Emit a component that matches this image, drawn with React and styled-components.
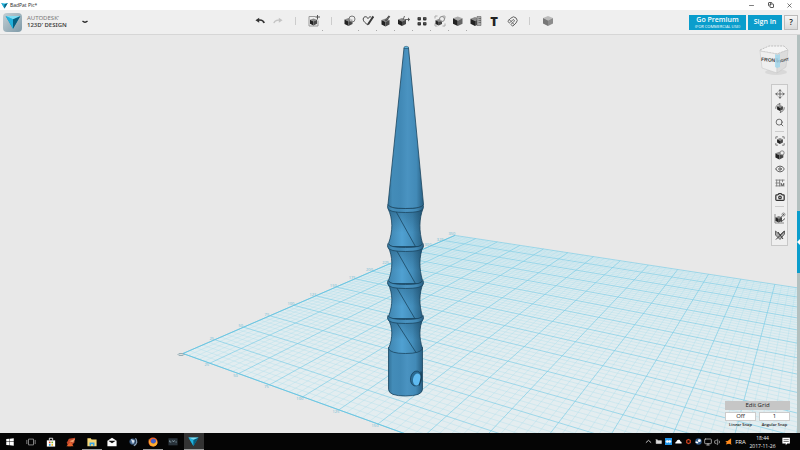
import React, { useState } from 'react';
import styled, { createGlobalStyle } from 'styled-components';
import { Eye, Magnet, Minus, Monitor, Move, Volume1, X, Copy, Search, Camera } from 'lucide-react';

const GlobalStyle = createGlobalStyle`
  * {
    box-sizing: border-box;
  }
  body {
    margin: 0;
    background: #e8e8e8;
    font-family: "Open Sans", "Noto Sans", sans-serif;
  }
  button, select {
    font-family: inherit;
    margin: 0;
    padding: 0;
    border: 0;
    background: none;
    color: inherit;
  }
  svg {
    display: block;
  }
`

/* ---------- icons ---------- */

const Icon = ({ size = 12, children }) => (
  <svg width={size} height={size} viewBox="0 0 24 24" fill="none" stroke="#3a3a3a" strokeWidth="2" aria-hidden="true">
    {children}
  </svg>
)

const Cube = ({ x = 2, y = 6, s = 16, top = '#8a8a8a', left = '#222', right = '#484848' }) => (
  <g transform={`translate(${x} ${y}) scale(${s / 16})`} stroke="none">
    <path d="M8 0 16 3 8 7 0 3Z" fill={top} />
    <path d="M0 3 8 7V16L0 12Z" fill={left} />
    <path d="M16 3 8 7V16L16 12Z" fill={right} />
  </g>
)

const Corners = ({ color = '#666' }) => (
  <path d="M2 7V2H7M17 2H22V7M22 17V22H17M7 22H2V17" stroke={color} />
)

const Gem = ({ size }) => (
  <svg width={size} height={size} viewBox="0 0 24 24" aria-hidden="true">
    <path d="M1 3H23L12 22Z" fill="#0d86ab" />
    <path d="M1 3 12 8 12 22Z" fill="#22b1dc" />
    <path d="M23 3 12 8 12 22Z" fill="#075f80" />
    <path d="M1 3H23L12 8Z" fill="#7fdcf2" />
  </svg>
)

const UndoIcon = () => (
  <Icon size={10}>
    <path d="M1 10 10 4V16Z" fill="#333" stroke="none" />
    <path d="M8 10Q19 8 22 17" stroke="#333" strokeWidth="4" />
  </Icon>
)
const RedoIcon = () => (
  <Icon size={10}>
    <path d="M23 10 14 4V16Z" fill="#c4c4c4" stroke="none" />
    <path d="M16 10Q5 8 2 17" stroke="#c4c4c4" strokeWidth="3" />
  </Icon>
)
const InsertIcon = () => (
  <Icon>
    <path d="M15 3H2V22H20V11" stroke="#999" />
    <Cube x={4} y={7} s={14} />
    <path d="M19 0V9M15 4H24" stroke="#555" />
  </Icon>
)
const PrimitivesIcon = () => (
  <Icon>
    <Cube x={1} y={6} />
    <circle cx="16" cy="8" r="6" fill="#efefef" fillOpacity="0.6" stroke="#777" />
  </Icon>
)
const SketchIcon = () => (
  <Icon>
    <path d="M12 20C5 15 1 11 3 6C5 2 10 3 12 7C14 4 16 3 18 4" />
    <path d="M12 19 22 4M20 3 23 6" strokeWidth="4" />
  </Icon>
)
const ConstructIcon = () => (
  <Icon>
    <Cube x={3} y={7} />
    <path d="M11 12 19 2" strokeWidth="4" />
    <path d="M11 12 19 2" stroke="#999" strokeWidth="1" />
  </Icon>
)
const ModifyIcon = () => (
  <Icon>
    <Cube x={0} y={6} />
    <path d="M10 10 13 2M14 9H23" stroke="#666" />
    <path d="M20 5 24 9 20 13Z" fill="#555" stroke="none" />
  </Icon>
)
const PatternIcon = () => (
  <Icon>
    {[[3, 4], [14, 4], [3, 14], [14, 14]].map(([x, y]) => (
      <g key={`${x}-${y}`}>
        <rect x={x} y={y} width="7" height="7" rx="2" fill="#333" stroke="none" />
        <path d={`M${x + 2} ${y + 2}H${x + 6}`} stroke="#aaa" strokeWidth="1" />
      </g>
    ))}
  </Icon>
)
const GroupIcon = () => (
  <Icon>
    <Corners color="#aaa" />
    <Cube x={3} y={8} s={13} />
    <circle cx="16" cy="8" r="5" stroke="#888" fill="#efefef" fillOpacity="0.6" />
  </Icon>
)
const CombineIcon = () => (
  <Icon>
    <Cube x={2} y={3} s={19} top="#aaa" left="#222" right="#666" />
  </Icon>
)
const MeasureIcon = () => (
  <Icon>
    <Cube x={1} y={4} s={18} />
    <path d="M14 3H22V21H14Z" fill="#aaa" stroke="#555" strokeWidth="1" />
    <path d="M17 7H22M17 11H22M17 15H22" strokeWidth="1" />
  </Icon>
)
const MaterialIcon = () => (
  <Icon>
    <Cube x={2} y={2} s={20} top="#bbb" left="#777" right="#8c8c8c" />
  </Icon>
)

const OrbitIcon = () => (
  <Icon size={10}>
    <Cube x={5} y={5} s={14} />
    <path d="M2 14C1 8 5 3 12 2M22 10C23 17 18 21 12 22M9 0 13 2 10 5M15 19 12 22 15 24" stroke="#666" />
  </Icon>
)
const FitIcon = () => (
  <Icon size={10}>
    <Corners />
    <Cube x={5} y={5} s={14} />
  </Icon>
)
const ShadeIcon = () => (
  <Icon size={10}>
    <Cube x={1} y={4} s={19} />
    <circle cx="17" cy="7" r="5" fill="#efefef" stroke="#777" />
  </Icon>
)
const GridSnapIcon = () => (
  <Icon size={10}>
    <path d="M1 5H23M1 12H13M1 19H23M4 4V20M11 4V20M18 4V10" stroke="#777" />
    <path d="M15 12V17H21V12" stroke="#333" />
  </Icon>
)
const SnapGroupIcon = () => (
  <Icon size={12}>
    <path d="M2 4V22H20" stroke="#888" />
    <Cube x={3} y={8} s={13} />
    <path d="M12 13 20 4M14 20 22 13" stroke="#555" />
    <circle cx="19" cy="5" r="3" stroke="#888" />
  </Icon>
)
const HideIcon = () => (
  <Icon size={12}>
    <path d="M3 4 12 12 21 4V10L12 21 3 12Z" fill="#aaa" stroke="#666" />
    <path d="M4 21 21 4M8 6 18 20" />
  </Icon>
)

/* ---------- scene ---------- */

// perspective of the work plane, t runs along the left edge and s along the front edge
const project = (t, s) => {
  const w = 1 + 0.0516 * t - 0.0338 * s;
  const x = (183 + 42.9 * t + 19.72 * s) / w;
  const y = (353 + 3.69 * t - 2.57 * s) / w;
  return [x.toFixed(1), y.toFixed(1)];
}

const T_MAX = 14;
const S_MAX = 20;

const gridPath = (major) => {
  let d = '';
  for (let i = 0; i <= S_MAX * 5; i++) {
    if ((i % 5 === 0) === major) d += `M${project(0, i / 5)}L${project(T_MAX, i / 5)}`;
  }
  for (let i = 0; i <= T_MAX * 5; i++) {
    if ((i % 5 === 0) === major) d += `M${project(i / 5, 0)}L${project(i / 5, S_MAX)}`;
  }
  return d;
}

const leftLabels = Array.from({ length: 14 }, (_, i) => i + 1);
const frontLabels = [1, 2, 3, 4, 5, 6];

const Grid = () => (
  <g>
    <path d={`M${project(0, 0)}L${project(T_MAX, 0)}L${project(T_MAX, S_MAX)}L${project(0, S_MAX)}Z`} fill="url(#plane)" />
    <path d={gridPath(false)} stroke="#a9dcec" strokeOpacity="0.6" strokeWidth="0.6" fill="none" />
    <path d={gridPath(true)} stroke="#7accE6" strokeOpacity="0.75" strokeWidth="0.9" fill="none" />
    <path d={`M${project(0, S_MAX)}L${project(0, 0)}L${project(T_MAX, 0)}`} stroke="#6cc6e2" strokeWidth="1" fill="none" />
    <g fontSize="4" fill="#6dbbd4" textAnchor="middle">
      {leftLabels.map((n) => {
        const [x, y] = project(n, 0);
        return <text key={n} x={x - 3} y={y}>{n * 25}</text>
      })}
      {frontLabels.map((n) => {
        const [x, y] = project(0, n);
        return <text key={n} x={x - 3} y={Number(y) + 3}>{n * 25}</text>
      })}
    </g>
    <ellipse cx="181" cy="354" rx="3" ry="1" fill="none" stroke="#7a9aa5" strokeWidth="0.8" />
  </g>
)

// narrowing bodies between the rings, each with a seam across it
const segments = [
  { top: 208, bottom: 243 },
  { top: 246, bottom: 280 },
  { top: 283, bottom: 316 },
  { top: 318, bottom: 348 },
];

const bodyPath = (top, bottom) => {
  const a = top + (bottom - top) * 0.3;
  const b = top + (bottom - top) * 0.65;
  return `M388 ${top}C393 ${a} 393 ${b} 388.500 ${bottom}Q390 ${bottom + 5} 405.500 ${bottom + 5}T422.500 ${bottom}C419 ${b} 419 ${a} 423 ${top}Z`;
}

const Wand = () => (
  <g stroke="#1b4560" strokeWidth="0.8">
    <path d="M388.500 347V389Q389 395.500 405.500 395.500T422.500 389V347Z" fill="url(#steel)" />
    {segments.map(({ top, bottom }) => (
      <g key={top}>
        <path d={bodyPath(top, bottom)} fill="url(#bright)" />
        <path d={bodyPath(top, bottom)} fill="url(#shadow)" stroke="none" />
        <path d={`M396 ${top + 3}L416 ${bottom + 4}`} />
      </g>
    ))}
    {[204, 243, 280, 315].map((y) => (
      <path
        key={y}
        d={`M388 ${y}Q389 ${y + 4} 405.500 ${y + 4}T423 ${y}Q424 ${y + 2} 423 ${y + 4}Q422 ${y + 8} 405.500 ${y + 8}T388 ${y + 4}Q387 ${y + 2} 388 ${y}Z`}
        fill="url(#steel)"
      />
    ))}
    <path d="M404 47.500 388 204Q389 208 405.500 208T423.500 204L408.500 47.500Z" fill="url(#steel)" />
    <path d="M404 48V46.500Q406 45 408.500 46.500V48Z" fill="#62b6dd" strokeWidth="0.5" />
    <ellipse cx="416" cy="378" rx="5.500" ry="7.500" fill="#2b6b93" transform="rotate(10 416 378)" />
    <ellipse cx="417" cy="379" rx="4" ry="6" fill="#5fbaf0" stroke="none" transform="rotate(10 417 379)" />
    <path d="M421 371Q422 378 419 385" stroke="#17405a" strokeWidth="1.200" fill="none" />
  </g>
)

const Scene = () => (
  <SceneSvg viewBox="0 34 800 399" preserveAspectRatio="xMidYMid slice" role="img" aria-label="3D model">
    <defs>
      <linearGradient id="plane" x1="0" y1="0" x2="0" y2="1">
        <stop offset="0" stopColor="#d9eaef" />
        <stop offset="0.2" stopColor="#e3edf0" />
        <stop offset="1" stopColor="#e8eef0" />
      </linearGradient>
      <linearGradient id="steel">
        <stop offset="0" stopColor="#33739a" />
        <stop offset="0.12" stopColor="#438cb8" />
        <stop offset="0.35" stopColor="#4189b6" />
        <stop offset="0.55" stopColor="#4a93c1" />
        <stop offset="0.8" stopColor="#428ab7" />
        <stop offset="1" stopColor="#285f82" />
      </linearGradient>
      <linearGradient id="bright">
        <stop offset="0" stopColor="#3f84ae" />
        <stop offset="0.4" stopColor="#50a1d2" />
        <stop offset="0.7" stopColor="#438dba" />
        <stop offset="1" stopColor="#265c7e" />
      </linearGradient>
      <linearGradient id="shadow" x1="0" y1="0" x2="0" y2="1">
        <stop offset="0" stopColor="#123a55" stopOpacity="0.35" />
        <stop offset="0.6" stopColor="#123a55" stopOpacity="0" />
      </linearGradient>
    </defs>
    <Grid />
    <Wand />
  </SceneSvg>
)

const ViewCube = () => (
  <CubeButton type="button" aria-label="View cube">
    <svg width="30" height="32" viewBox="0 0 30 32">
      <ellipse cx="17" cy="27" rx="11" ry="3" fill="#d8d8d8" />
      <path d="M1 5 10 1H25L29 5 18 9 1 6Z" fill="#f4f4f4" stroke="#aaa" strokeDasharray="2 1" strokeWidth="0.7" />
      <path d="M1 6 18 9V28L3 23Z" fill="#efefef" stroke="#c4c4c4" strokeWidth="0.5" />
      <path d="M18 9 29 5 27 22 18 28Z" fill="#dcdcdc" stroke="#c4c4c4" strokeWidth="0.5" />
      <g fontFamily="Liberation Sans, sans-serif" fontSize="5" fontWeight="700" fill="#444">
        <text x="2" y="16" transform="rotate(4 2 16)">FRONT</text>
        <text x="18" y="18" fontSize="4" transform="rotate(-12 18 18)">RIGHT</text>
      </g>
      <path d="M16 9 18 10 21 9V22L18 23 16 22Z" fill="#9fd6ec" fillOpacity="0.8" />
    </svg>
  </CubeButton>
)

/* ---------- taskbar pictures ---------- */

const apps = [
  { name: 'Start', art: <path d="M3 5 11 4V11H3ZM12 4 21 3V11H12ZM3 12H11V20L3 19ZM12 12H21V21L12 20Z" fill="#fff" stroke="none" /> },
  { name: 'Task view', art: <path d="M6 5H18V19H6ZM2 7V17M22 7V17" stroke="#999" /> },
  {
    name: 'Store', art: <>
      <path d="M2 8H22V23H2Z" fill="#fff" stroke="none" /><path d="M8 8V3H16V8" stroke="#fff" />
      <path d="M7 11H11V15H7Z" fill="#e5532a" stroke="none" /><path d="M13 11H17V15H13Z" fill="#7ab82c" stroke="none" />
      <path d="M7 17H11V21H7Z" fill="#1a9fe0" stroke="none" /><path d="M13 17H17V21H13Z" fill="#f3b51d" stroke="none" />
    </>
  },
  {
    name: 'Launcher', art: <>
      <path d="M2 13 7 4 22 2 20 13 12 22H5Z" fill="#c5482b" stroke="none" />
      <path d="M8 10 22 4 17 13Z" fill="#f0a06c" stroke="none" /><path d="M1 22 11 12 18 22Z" fill="#e8672f" stroke="none" />
    </>
  },
  {
    name: 'Explorer', open: true, art: <>
      <path d="M1 3H9L11 6H23V22H1Z" fill="#f7d777" stroke="none" /><path d="M6 21V13H18V21H14V17H10V21Z" fill="#3aa3e3" stroke="none" />
    </>
  },
  {
    name: 'Mail', art: <>
      <path d="M1 9 12 2 23 9V22H1Z" fill="#fff" stroke="none" /><path d="M3 9H21L12 15Z" fill="#111" stroke="none" />
    </>
  },
  {
    name: 'TeamSpeak', art: <>
      <circle cx="11" cy="11" r="7" fill="#52739c" stroke="#27415f" /><path d="M7 5 16 9 12 17Z" fill="#dce6f0" stroke="none" />
      <path d="M18 3Q26 14 14 21" stroke="#8ba3bd" strokeWidth="3" />
    </>
  },
  {
    name: 'Firefox', open: true, art: <>
      <circle cx="12" cy="12" r="11" fill="#f0652a" stroke="none" /><circle cx="13" cy="10" r="6" fill="#4260c9" stroke="none" />
      <path d="M2 5Q5 15 13 16Q20 15 20 6Q27 19 14 23Q1 22 2 5Z" fill="#ffb02e" stroke="none" />
    </>
  },
  {
    name: 'Editor', art: <>
      <path d="M1 3H23V20H1Z" fill="#29323a" stroke="none" /><path d="M4 8V12H8M11 8 13 12 16 8M18 12H21" stroke="#8da3ad" />
    </>
  },
  { name: '123D Design', active: true, gem: true },
];

const tray = [
  { name: 'Show hidden icons', art: <path d="M3 16 12 8 21 16" stroke="#ddd" strokeWidth="3" /> },
  { name: 'Power', art: <path d="M4 9H22V19H4ZM2 6H8V12" fill="#ddd" stroke="#ddd" /> },
  { name: 'TeamViewer', art: <><path d="M0 0H24V24H0Z" fill="#2196ea" stroke="none" /><path d="M3 12 8 7V10H16V7L21 12 16 17V14H8V17Z" fill="#fff" stroke="#fff" /></> },
  { name: 'OneDrive', art: <path d="M1 19Q0 13 5 12Q7 4 14 6Q18 7 18 11Q24 12 23 19Z" fill="#fff" stroke="none" /> },
  { name: 'Updater', art: <path d="M12 5 18 8V16L12 19 6 16V8Z" stroke="#d9451f" strokeWidth="4" /> },
  { name: 'Steam', art: <><circle cx="12" cy="12" r="11" fill="#315c8c" stroke="none" /><circle cx="15" cy="9" r="5" fill="#fff" stroke="none" /><path d="M2 14 11 16" stroke="#fff" strokeWidth="5" /></> },
  { name: 'Network', icon: <Monitor size={8} color="#ddd" /> },
  { name: 'Volume', icon: <Volume1 size={8} color="#ccc" /> },
  { name: 'Antivirus', art: <path d="M21 1V20L23 23 14 20 3 22 6 15 1 11 9 10Z" fill="#ff8a1c" stroke="none" /> },
];

const tools = [
  { name: 'Undo', icon: <UndoIcon /> },
  { name: 'Redo', icon: <RedoIcon /> },
  null,
  { name: 'Insert', icon: <InsertIcon />, menu: true },
  null,
  { name: 'Primitives', icon: <PrimitivesIcon />, menu: true },
  { name: 'Sketch', icon: <SketchIcon />, menu: true },
  { name: 'Construct', icon: <ConstructIcon />, menu: true },
  { name: 'Modify', icon: <ModifyIcon />, menu: true },
  { name: 'Pattern', icon: <PatternIcon />, menu: true },
  { name: 'Grouping', icon: <GroupIcon />, menu: true },
  { name: 'Combine', icon: <CombineIcon />, menu: true },
  { name: 'Measure', icon: <MeasureIcon /> },
  { name: 'Text', icon: 'T' },
  { name: 'Snap', icon: <Magnet size={11} color="#555" /> },
  null,
  { name: 'Material', icon: <MaterialIcon /> },
];

const navTools = [
  { name: 'Pan', icon: <Move size={10} color="#555" /> },
  { name: 'Orbit', icon: <OrbitIcon /> },
  { name: 'Zoom', icon: <Search size={9} color="#444" /> },
  null,
  { name: 'Fit', icon: <FitIcon /> },
  { name: 'Shading', icon: <ShadeIcon /> },
  { name: 'Visibility', icon: <Eye size={10} color="#444" /> },
  { name: 'Grid', icon: <GridSnapIcon /> },
  { name: 'Screenshot', icon: <Camera size={10} color="#333" strokeWidth={3} /> },
  null,
  { name: 'Group snap', icon: <SnapGroupIcon />, tall: true },
  { name: 'Sketch visibility', icon: <HideIcon />, tall: true },
];

function App() {
  const [linear, setLinear] = useState('Off');
  const [angular, setAngular] = useState('1');

  return (
    <Page>
      <GlobalStyle />
      <TitleBar>
        <Gem size={7} />
        <Title>BadPat Pic*</Title>
        <WindowButton type="button" aria-label="Minimize"><Minus size={7} /></WindowButton>
        <WindowButton type="button" aria-label="Restore"><Copy size={6} strokeWidth={3} /></WindowButton>
        <WindowButton type="button" aria-label="Close"><X size={7} /></WindowButton>
      </TitleBar>

      <Toolbar>
        <Brand>
          <Logo><Gem size={16} /></Logo>
          <BrandName>
            <span>AUTODESK’</span>
            <strong>123D’ DESIGN</strong>
          </BrandName>
          <MenuButton type="button" aria-label="Menu">
            <Icon size={6}><path d="M2 8Q12 18 22 8" stroke="#222" strokeWidth="5" /></Icon>
          </MenuButton>
        </Brand>
        <Tools>
          {tools.map((tool, i) => tool
            ? <ToolButton key={tool.name} type="button" aria-label={tool.name} $menu={tool.menu}>{tool.icon}</ToolButton>
            : <ToolDivider key={i} />
          )}
        </Tools>
        <Account>
          <PremiumButton type="button">
            Go Premium
            <small>(FOR COMMERCIAL USE)</small>
          </PremiumButton>
          <SignInButton type="button">Sign In</SignInButton>
          <HelpButton type="button">?</HelpButton>
        </Account>
      </Toolbar>

      <Viewport>
        <Scene />
        <ViewCube />
        <NavBar>
          {navTools.map((tool, i) => tool
            ? <NavButton key={tool.name} type="button" aria-label={tool.name} $tall={tool.tall}>{tool.icon}</NavButton>
            : <NavDivider key={i} />
          )}
        </NavBar>
        <SnapPanel>
          <EditGrid type="button">Edit Grid</EditGrid>
          <SnapField>
            <SnapSelect id="linear" value={linear} onChange={(e) => setLinear(e.target.value)}>
              <option>Off</option>
              <option>1</option>
            </SnapSelect>
            <label htmlFor="linear">Linear Snap</label>
          </SnapField>
          <SnapField>
            <SnapSelect id="angular" value={angular} onChange={(e) => setAngular(e.target.value)}>
              <option>1</option>
              <option>5</option>
            </SnapSelect>
            <label htmlFor="angular">Angular Snap</label>
          </SnapField>
        </SnapPanel>
        <SideRail>
          <RailHandle type="button" aria-label="Open parts panel">
            <svg width="3" height="6" viewBox="0 0 3 6"><path d="M3 0V6L0 3Z" fill="#fff" /></svg>
          </RailHandle>
        </SideRail>
      </Viewport>

      <Taskbar>
        <Apps>
          {apps.map((app) => (
            <AppButton key={app.name} type="button" aria-label={app.name} $open={app.open} $active={app.active}>
              {app.gem ? <Gem size={11} /> : <Icon size={10}>{app.art}</Icon>}
            </AppButton>
          ))}
        </Apps>
        <Tray>
          {tray.map((item) => (
            <TrayButton key={item.name} type="button" aria-label={item.name}>
              {item.icon || <Icon size={7}>{item.art}</Icon>}
            </TrayButton>
          ))}
          <Language type="button">FRA</Language>
          <Clock>
            <time>18:44</time>
            <time>2017-11-26</time>
          </Clock>
          <Notice type="button" aria-label="Notifications">
            <Icon size={9}><path d="M1 2H21V17H14L10 22V17H1Z" fill="#fff" stroke="none" /><path d="M4 7H18M4 12H18" stroke="#555" /></Icon>
          </Notice>
        </Tray>
      </Taskbar>
    </Page>
  )
}

export default App;

const Page = styled.div`
  display: flex;
  flex-direction: column;
  min-height: 100vh;
  color: #222;
`

const TitleBar = styled.header`
  display: flex;
  align-items: center;
  height: 10px;
  padding: 0 1px;
  background: #fff;
`

const Title = styled.span`
  flex: 1;
  margin-left: 2px;
  font-size: 5px;
  line-height: 10px;
`

const WindowButton = styled.button`
  display: flex;
  align-items: center;
  justify-content: center;
  width: 19px;
  height: 10px;
`

const Toolbar = styled.div`
  display: flex;
  align-items: center;
  height: 25px;
  padding-right: 2px;
  background: #efefef;
  border-bottom: 1px solid #d6d6d6;
`

const Brand = styled.div`
  display: flex;
  align-items: center;
  flex: 0 0 251px;
  padding-left: 3px;
`

const Logo = styled.div`
  display: flex;
  align-items: center;
  justify-content: center;
  width: 19px;
  height: 19px;
  border-radius: 4px;
  background: linear-gradient(135deg, #c3cfd4, #7e9aa8);
`

const BrandName = styled.div`
  display: flex;
  flex-direction: column;
  margin-left: 5px;
  width: 54px;
  font-family: "Noto Sans", sans-serif;
  font-size: 6px;
  line-height: 7px;
  color: #777;
  white-space: nowrap;

  strong {
    font-weight: 600;
    color: #444;
  }
`

const MenuButton = styled.button`
  padding: 2px 1px;
`

const Tools = styled.nav`
  display: flex;
  align-items: center;
  padding-bottom: 2px;
`

const ToolButton = styled.button`
  position: relative;
  display: flex;
  align-items: center;
  justify-content: center;
  width: 18px;
  height: 20px;
  font-size: 13px;
  line-height: 20px;
  font-weight: 800;

  &::after {
    content: "";
    display: ${(p) => (p.$menu ? 'block' : 'none')};
    position: absolute;
    right: 0;
    bottom: 0;
    width: 1px;
    height: 1px;
    background: #aaa;
  }
`

const ToolDivider = styled.span`
  width: 1px;
  height: 8px;
  margin: 0 9px 0 8px;
  background: #ccc;
`

const Account = styled.div`
  display: flex;
  gap: 2px;
  margin-left: auto;
`

const BlueButton = styled.button`
  height: 15px;
  background: #0a9dcc;
  color: #fff;
  font-size: 7px;
  line-height: 8px;
  font-weight: 600;
`

const PremiumButton = styled(BlueButton)`
  width: 57px;

  small {
    display: block;
    font-size: 4px;
    line-height: 5px;
    font-weight: 400;
    white-space: nowrap;
  }
`

const SignInButton = styled(BlueButton)`
  width: 34px;
`

const HelpButton = styled.button`
  width: 14px;
  height: 15px;
  border: 1px solid #bbb;
  background: linear-gradient(#f6f6f6, #d9d9d9);
  font-size: 8px;
  line-height: 12px;
  font-weight: 600;
`

const Viewport = styled.main`
  position: relative;
  display: flex;
  flex: 1;
  overflow: hidden;
  background: #e8e8e8;
`

const SceneSvg = styled.svg`
  position: absolute;
  width: 100%;
  height: 100%;
`

const CubeButton = styled.button`
  position: absolute;
  top: 10px;
  right: 11px;
`

const NavBar = styled.nav`
  position: absolute;
  top: 49px;
  right: 12px;
  display: flex;
  flex-direction: column;
  align-items: center;
  width: 17px;
  padding: 2px 0;
  background: #efefef;
  border: 1px solid #c8c8c8;
`

const NavButton = styled.button`
  display: flex;
  align-items: center;
  justify-content: center;
  width: 15px;
  height: ${(p) => (p.$tall ? '17px' : '14px')};
`

const NavDivider = styled.span`
  width: 9px;
  height: 1px;
  margin: 2px 0;
  background: #ccc;
`

const SnapPanel = styled.div`
  position: absolute;
  right: 10px;
  bottom: 4px;
  display: grid;
  grid-template-columns: 31px 31px;
  gap: 2px 3px;
`

const EditGrid = styled.button`
  grid-column: 1 / -1;
  height: 9px;
  background: #c6c6c6;
  font-size: 6px;
  line-height: 9px;
  font-weight: 500;
`

const SnapField = styled.div`
  display: flex;
  flex-direction: column;
  align-items: center;
  font-size: 4px;
  line-height: 8px;
  font-weight: 600;
  white-space: nowrap;
`

const SnapSelect = styled.select`
  appearance: none;
  width: 100%;
  height: 9px;
  border: 1px solid #ccc;
  background: #fff;
  font-size: 6px;
  line-height: 7px;
  font-weight: 500;
  text-align: center;
  text-align-last: center;
`

const SideRail = styled.aside`
  position: relative;
  display: flex;
  align-items: center;
  width: 3px;
  margin-left: auto;
  padding-top: 16px;
  background: #b3c0bf;
`

const RailHandle = styled.button`
  display: flex;
  align-items: center;
  width: 3px;
  height: 62px;
  background: #0a9dcc;
`

const Taskbar = styled.footer`
  display: flex;
  justify-content: space-between;
  height: 17px;
  background: #050505;
  color: #eee;
`

const Apps = styled.div`
  display: grid;
  grid-template-columns: repeat(10, 1fr);
  width: 204px;
`

const AppButton = styled.button`
  display: flex;
  align-items: center;
  justify-content: center;
  background: ${(p) => (p.$active ? '#333' : 'none')};
  box-shadow: ${(p) => (p.$open || p.$active ? 'inset 0 -1px #9a9a9a' : 'none')};
`

const Tray = styled.div`
  display: flex;
  align-items: center;
  padding-right: 4px;
`

const TrayButton = styled.button`
  display: flex;
  align-items: center;
  justify-content: center;
  width: 10px;
  height: 17px;
`

const Language = styled.button`
  width: 15px;
  font-size: 6px;
`

const Clock = styled.div`
  display: flex;
  flex-direction: column;
  align-items: center;
  width: 29px;
  font-size: 5px;
  line-height: 8px;
`

const Notice = styled.button`
  display: flex;
  justify-content: center;
  width: 19px;
`
